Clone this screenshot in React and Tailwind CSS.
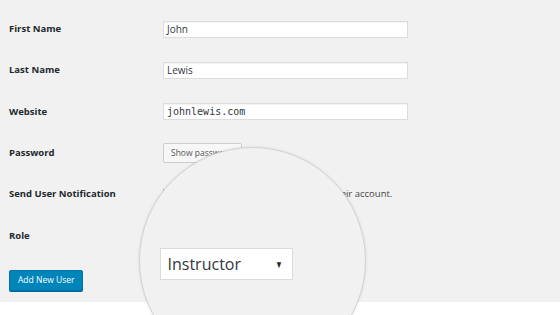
export default function App() {
  const rows = [
    { label: 'First Name', value: 'John' },
    { label: 'Last Name', value: 'Lewis' },
    { label: 'Website', value: 'johnlewis.com', mono: true },
  ];

  return (
    <div className="relative w-[560px] h-[315px] overflow-hidden bg-[#f1f1f1] font-['Open_Sans',sans-serif] text-[#23282d]">
      <div className="h-[302px] pt-[8.5px] pl-[9px]">
        {rows.map(r => (
          <div key={r.label} className="flex items-center h-[41.3px]">
            <div className="w-[154px] text-[9.5px] font-bold">{r.label}</div>
            <div className="w-[245px] h-[17px] bg-white border border-[#dcdcdc] shadow-[inset_0_1px_1px_rgba(0,0,0,0.05)] flex items-center px-[3px]">
              <span className={r.mono ? "text-[10px] font-['DejaVu_Sans_Mono',monospace] text-[#32373c]" : 'text-[10px] text-[#32373c]'}>{r.value}</span>
            </div>
          </div>
        ))}
        <div className="flex items-center h-[41.3px]">
          <div className="w-[154px] text-[9.5px] font-bold">Password</div>
          <div className="w-[79px] h-[20px] bg-[#f7f7f7] border border-[#ccc] rounded-[2px] text-[8.5px] text-[#555] flex items-center pl-[7px]">
            Show password
          </div>
        </div>
        <div className="flex items-center h-[41.3px]">
          <div className="w-[154px] text-[9.5px] font-bold">Send User Notification</div>
          <div className="flex items-center gap-[5px] text-[9.5px] text-[#444]">
            <span className="w-[10px] h-[10px] bg-white border border-[#b4b9be]"></span>
            Send the new user an email about their account.
          </div>
        </div>
        <div className="flex items-center h-[41.3px]">
          <div className="w-[154px] text-[9.5px] font-bold">Role</div>
        </div>
        <button className="mt-[14px] h-[21px] px-[8px] bg-[#0085ba] border border-[#0073aa] rounded-[2px] text-white text-[8.5px] shadow-[0_1px_0_#006799]">
          Add New User
        </button>
      </div>
      <div className="h-[13px] bg-white"></div>

      {/* magnifier */}
      <div className="absolute left-[138.5px] top-[146.5px] w-[227px] h-[227px] rounded-full bg-[#f1f1f1] border-[1.5px] border-[#d2d2d2] shadow-[0_0_3px_rgba(0,0,0,0.1)] pl-[20px] pt-[100.5px]">
        <div className="w-[133px] h-[32px] bg-white border border-[#dcdcdc] flex items-center justify-between pl-[7px] pr-[8px]">
          <span className="text-[16px] text-[#32373c]">Instructor</span>
          <span className="text-[10px] text-[#23282d] scale-x-75">▼</span>
        </div>
      </div>
    </div>
  );
}
